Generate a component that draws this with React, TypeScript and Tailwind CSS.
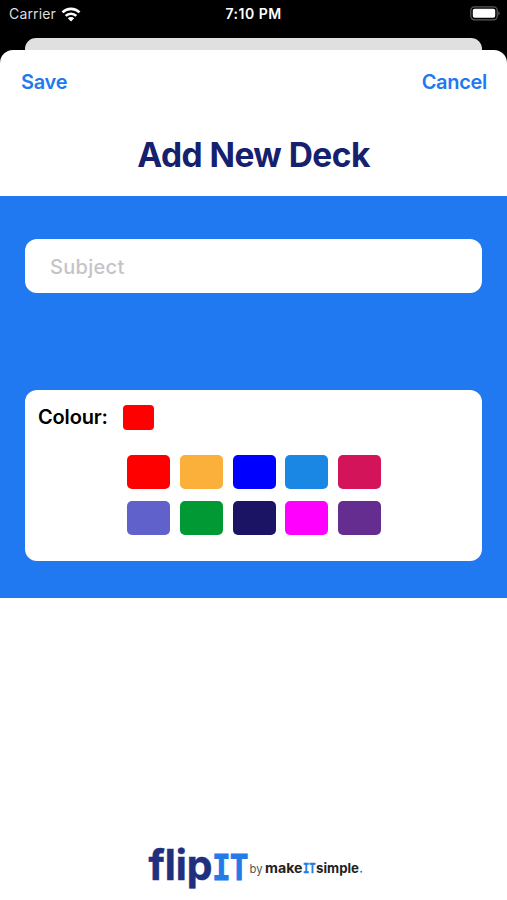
const COLOURS = [
	{ name: "red", className: "bg-[#ff0000]" },
	{ name: "orange", className: "bg-[#fbb03b]" },
	{ name: "blue", className: "bg-[#0000ff]" },
	{ name: "sky", className: "bg-[#1b87e5]" },
	{ name: "crimson", className: "bg-[#d4145a]" },
	{ name: "indigo", className: "bg-[#6161cc]" },
	{ name: "green", className: "bg-[#009933]" },
	{ name: "navy", className: "bg-[#1b1464]" },
	{ name: "magenta", className: "bg-[#ff00ff]" },
	{ name: "purple", className: "bg-[#662d91]" },
];

function WifiIcon() {
	return (
		<svg width="20" height="15" viewBox="0 0 20 15" fill="none" stroke="white" strokeWidth="2.7">
			<path d="M1.5 5.4a12.2 12.2 0 0 1 17 0" />
			<path d="M4.7 8.9a7.6 7.6 0 0 1 10.6 0" />
			<path d="M10 14.4 6.8 11.2a4.6 4.6 0 0 1 6.4 0Z" fill="white" stroke="none" />
		</svg>
	);
}

function BatteryIcon() {
	return (
		<svg width="31" height="15" viewBox="0 0 31 15" fill="none">
			<rect x="0.8" y="0.8" width="26.4" height="13" rx="3.6" stroke="#5c5c5c" strokeWidth="1.2" />
			<rect x="2.8" y="2.8" width="22.4" height="9" rx="1.8" fill="white" />
			<path d="M28.4 5.2c1.7.7 1.7 3.5 0 4.2Z" fill="#5c5c5c" />
		</svg>
	);
}

function StatusBar() {
	return (
		<div className="grid h-[38px] grid-cols-3 items-start px-[9px] pt-[5px] text-[14px] leading-[18px] text-white">
			<div className="flex items-center gap-[5px]">
				<span className="tracking-[0.15px] text-[#dddddd]">Carrier</span>
				<WifiIcon />
			</div>
			<span className="text-center font-semibold tracking-[0.5px]">7:10 PM</span>
			<div className="-mr-[3px] flex justify-end pt-px">
				<BatteryIcon />
			</div>
		</div>
	);
}

function Logo() {
	return (
		<svg width="220" height="61" viewBox="0 -6 220 61" fontFamily="Inter, sans-serif" fontWeight="700">
			<text x="4.5" y="35" fontSize="42" fill="#20307f" stroke="#20307f" strokeWidth="0.5" textLength="64" lengthAdjust="spacingAndGlyphs">
				flip
			</text>
			<g fill="#247be8" stroke="#247be8" fontFamily="Liberation Mono, monospace">
				<text x="68.5" y="34.5" fontSize="38" strokeWidth="1.2" textLength="35.5" lengthAdjust="spacingAndGlyphs">
					IT
				</text>
				<text x="159" y="27.5" fontSize="14" strokeWidth="0.4" textLength="12.5" lengthAdjust="spacingAndGlyphs">
					IT
				</text>
			</g>
			<text x="105.5" y="27.5" fontSize="12" fill="#555555" fontWeight="400" textLength="13" lengthAdjust="spacingAndGlyphs">
				by
			</text>
			<text x="121" y="27.5" fontSize="13.5" fill="#222222" textLength="37.5" lengthAdjust="spacingAndGlyphs">
				make
			</text>
			<text x="172" y="27.5" fontSize="13.5" fill="#222222" textLength="43" lengthAdjust="spacingAndGlyphs">
				simple
			</text>
			<circle cx="217.2" cy="26.7" r="1" fill="#247be8" />
		</svg>
	);
}

export default function App() {
	return (
		<div className="flex h-[900px] w-[507px] flex-col bg-black font-['Inter',sans-serif]">
			<StatusBar />
			<div className="mx-[25px] h-3 shrink-0 rounded-t-[11px] bg-[#e0e0e0]" />
			<div className="flex flex-1 flex-col rounded-t-[13px] bg-white">
				<div className="flex justify-between pr-5 pl-[21px] pt-[18px] text-[20px] leading-7 font-semibold tracking-[-0.3px] text-[#2079f0]">
					<button>Save</button>
					<button>Cancel</button>
				</div>
				<h1 className="mt-[38px] mb-[20px] text-center text-[33.5px] leading-[42px] font-bold tracking-[-0.55px] text-[#15206f]">
					Add New Deck
				</h1>
				<div className="h-[402px] bg-[#2079f0] px-[25px] pt-[43px]">
					<input
						className="block h-[54px] w-full rounded-[12px] bg-white px-[25px] pt-px text-[20px] tracking-[0.3px] placeholder:font-[450] placeholder:text-[#c4c4c6]"
						placeholder="Subject"
					/>
					<div className="mt-[97px] h-[171px] rounded-[12px] bg-white pt-[14px]">
						<div className="flex items-center gap-[15px] pl-[13px]">
							<span className="text-[20px] leading-[26px] font-semibold tracking-[-0.15px] text-black">Colour:</span>
							<div className="h-[25px] w-[31px] rounded-[4px] bg-[#ff0000]" />
						</div>
						<div className="mt-[25px] ml-[102.2px] grid w-[254px] grid-cols-5 gap-x-[9.5px] gap-y-3">
							{COLOURS.map((colour) => (
								<button key={colour.name} aria-label={colour.name} className={`h-[34px] rounded-[5px] ${colour.className}`} />
							))}
						</div>
					</div>
				</div>
				<div className="mt-auto flex justify-center">
					<Logo />
				</div>
			</div>
		</div>
	);
}
